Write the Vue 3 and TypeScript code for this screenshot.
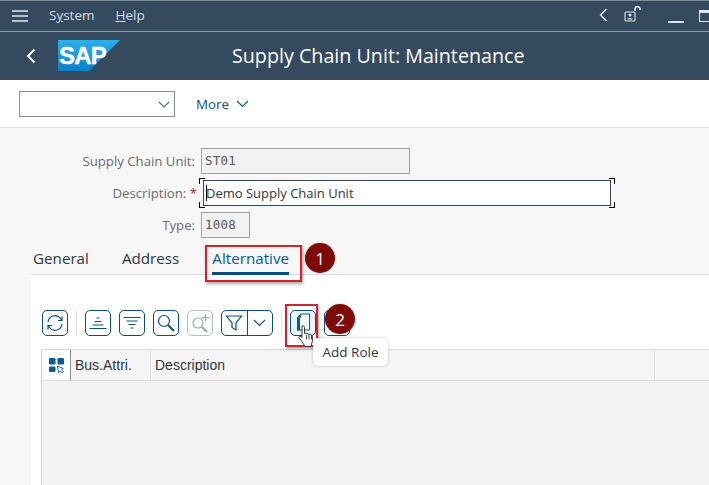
<script setup lang="ts">
const tabs: string[] = ['General', 'Address', 'Alternative']
</script>

<template>
  <div class="page">
    <header class="menubar">
      <svg class="burger" width="16" height="12" viewBox="0 0 16 12"><path d="M0 1h16M0 6h16M0 11h16" stroke="#dfe8f2" stroke-width="1.6" /></svg>
      <span class="menu first">S<u>y</u>stem</span>
      <span class="menu"><u>H</u>elp</span>
      <div class="sys-icons">
        <svg class="sys-back" width="10" height="14" viewBox="0 0 10 14"><path d="M8.500 1 2.500 7l6 6" fill="none" stroke="#e6eef6" stroke-width="1.300" /></svg>
        <svg class="lock" width="17" height="17" viewBox="0 0 17 17"><rect x="1" y="7" width="10" height="9" rx="1" fill="none" stroke="#dbe6f2" stroke-width="1.100" /><circle cx="6" cy="10" r="1.500" fill="#dbe6f2" /><path d="M3.500 14.500c0-2 5-2 5 0z" fill="#dbe6f2" /><path d="M11 6V3.500a2.600 2.600 0 0 1 5 0V5" fill="none" stroke="#dbe6f2" stroke-width="1.600" /></svg>
        <span class="minimize"></span>
        <span class="maximize"></span>
      </div>
    </header>

    <section class="titlebar">
      <svg class="back" width="11" height="16" viewBox="0 0 11 16"><path d="M9.500 1.500 3 8l6.500 6.500" fill="none" stroke="#fff" stroke-width="2" /></svg>
      <svg class="logo" width="62" height="31" viewBox="0 0 62 31">
        <defs><linearGradient id="sapg" x1="0" y1="0" x2="0" y2="1"><stop offset="0" stop-color="#2db0ec" /><stop offset="1" stop-color="#0a80c8" /></linearGradient></defs>
        <polygon points="0,0 62,0 31,31 0,31" fill="url(#sapg)" />
        <text x="1" y="24" class="logo-text">SAP</text>
      </svg>
      <h1 class="title">Supply Chain Unit: Maintenance</h1>
    </section>

    <section class="toolbar">
      <div class="select">
        <svg width="12" height="7" viewBox="0 0 12 7"><path d="m1 1 5 5 5-5" fill="none" stroke="#4d6a85" stroke-width="1.100" /></svg>
      </div>
      <span class="more">More</span>
      <svg width="13" height="8" viewBox="0 0 13 8"><path d="m1 1 5.500 5.500L12 1" fill="none" stroke="#0a5a94" stroke-width="1.200" /></svg>
    </section>

    <main class="content">
      <div class="form">
        <div class="row">
          <label class="label">Supply Chain Unit:</label>
          <div class="field readonly wide mono">ST01</div>
        </div>
        <div class="row">
          <label class="label">Description: <span class="req">*</span></label>
          <div class="focus-wrap">
            <span class="caret"></span>
            <div class="field editing">Demo Supply Chain Unit</div>
            <i class="br tl"></i><i class="br bl"></i><i class="br tr"></i><i class="br brr"></i>
          </div>
        </div>
        <div class="row">
          <label class="label">Type:</label>
          <div class="field readonly narrow mono">1008</div>
        </div>
      </div>

      <nav class="tabs">
        <span v-for="t in tabs" :key="t" class="tab" :class="{ active: t === 'Alternative' }">{{ t }}</span>
        <span class="mark mark-tab"></span>
        <span class="badge badge-1">1</span>
      </nav>

      <div class="panel">
        <div class="buttons">
          <button class="btn">
            <svg width="20" height="20" viewBox="0 0 20 20" fill="none" stroke="#0a4d7e" stroke-width="1.200"><path d="M3 9a7 7 0 0 1 12.500-3.500L17 7.500M17 3.500v4h-4M17 11A7 7 0 0 1 4.500 14.500L3 12.500M3 16.500v-4h4" /></svg>
          </button>
          <span class="sep"></span>
          <button class="btn">
            <svg width="20" height="20" viewBox="0 0 20 20" stroke="#0a4d7e" stroke-width="1.100"><path d="M8.500 5h3M6.500 8.500h7M4.500 12h11M1.500 15.500h17" /></svg>
          </button>
          <button class="btn">
            <svg width="20" height="20" viewBox="0 0 20 20" stroke="#0a4d7e" stroke-width="1.100"><path d="M1.500 4.500h17M4.500 8h11M6.500 11.500h7M8.500 15h3" /></svg>
          </button>
          <button class="btn">
            <svg width="20" height="20" viewBox="0 0 20 20" fill="none" stroke="#0a4d7e" stroke-width="1.200"><circle cx="8" cy="8" r="5.500" /><path d="m12 12 6 6" stroke-width="2" /></svg>
          </button>
          <button class="btn disabled">
            <svg width="22" height="22" viewBox="0 0 22 22" fill="none" stroke="#88a5bd" stroke-width="1.100"><circle cx="9" cy="11" r="5" /><path d="m13 15 5 5" stroke-width="1.800" /><path d="M16.500 2v7M13 5.500h7" /></svg>
          </button>
          <div class="split">
            <span class="part">
              <svg width="18" height="18" viewBox="0 0 18 18" fill="none" stroke="#0a4d7e" stroke-width="1.200"><path d="M1.500 2h15L11 9v7l-4-2.500V9z" /></svg>
            </span>
            <span class="part">
              <svg width="13" height="8" viewBox="0 0 13 8" fill="none" stroke="#0a4d7e" stroke-width="1.100"><path d="m1 1 5.500 5.500L12 1" /></svg>
            </span>
          </div>
          <span class="sep"></span>
          <button class="btn hover">
            <svg width="16" height="20" viewBox="0 0 16 20"><path d="M6 1h8.500v16H2.500V4.500z" fill="#f4f9fd" stroke="#0a5a94" stroke-width="1" /><path d="M6 1v3.500H2.500z" fill="#0a4d7e" /><path d="M2 4.500h3v13H2z" fill="#0a5a94" /></svg>
          </button>
          <button class="btn"></button>
          <span class="mark mark-btn"></span>
          <span class="badge badge-2">2</span>
          <span class="tooltip">Add Role</span>
          <svg class="cursor" width="18" height="25" viewBox="0 0 18 24"><path d="M4 1.500c1.300-.7 2.500 0 2.500 1.500v6l1-.3c.6-.2 1.300.2 1.500.8l.3-.2c.7-.3 1.400 0 1.600.6.700-.3 1.500 0 1.700.7.800-.3 1.700.2 1.800 1.100v4.800l-1.500 5.500H7l-3-5-3-3.500c-.8-1.200.6-2.400 1.800-1.500l1.200 1z" fill="#fff" stroke="#222" stroke-width=".9" /><path d="M8.500 10v5M11 10v5M13.500 11v4" stroke="#222" stroke-width=".8" /></svg>
        </div>

        <div class="table">
          <div class="thead">
            <div class="selector">
              <svg width="17" height="17" viewBox="0 0 17 17"><rect x="1" y="1" width="6.500" height="6.500" rx="1.200" fill="#0a5a94" /><rect x="9.500" y="1" width="6.500" height="6.500" rx="1.200" fill="#0a5a94" /><rect x="1" y="9.500" width="6.500" height="5.500" rx="1.200" fill="#0a5a94" /><path d="m9.500 9 1 6.500 1.500-1.500 2.500 2 1-1-2-2.500 1.800-1z" fill="#fff" stroke="#0a5a94" stroke-width=".9" /></svg>
            </div>
            <div class="th col-bus">Bus.Attri.</div>
            <div class="th col-desc">Description</div>
            <div class="th col-rest"></div>
          </div>
          <div class="tbody"></div>
        </div>
      </div>
    </main>
  </div>
</template>

<style>
html, body { margin: 0; height: 100%; overflow: hidden; }
</style>

<style scoped>
.page {
  width: 709px;
  height: 485px;
  display: flex;
  flex-direction: column;
  overflow: hidden;
  background: #f7f7f7;
  font-family: "Open Sans", "Noto Sans", sans-serif;
}
.menubar {
  box-sizing: border-box;
  border-top: 1px solid #7c8b9b;
  border-bottom: 1px solid #8797a6;
  background: #354a5f;
  flex: none;
  height: 32px;
  display: flex;
  align-items: center;
  padding-left: 12px;
  color: #d5dfe9;
  font-size: 13.500px;
}
.burger { flex: none; }
.menu { margin-left: 21px; padding-bottom: 2px; }
.sys-icons {
  margin-left: auto;
  display: flex;
  align-items: center;
  width: 111px;
  flex: none;
}
.sys-back { flex: none; margin-bottom: 3px; }
.lock { margin-left: 16px; margin-bottom: 5px; flex: none; }
.minimize {
  width: 16px;
  height: 2px;
  background: #dbe6f2;
  margin-left: 27px;
  margin-top: 12px;
  flex: none;
}
.maximize {
  width: 14px;
  height: 12px;
  box-sizing: border-box;
  border: 1px solid #dbe6f2;
  border-top-width: 3px;
  margin-left: 15px;
  flex: none;
}
.titlebar {
  height: 48px;
  flex: none;
  background: #354a5f;
  display: flex;
  align-items: center;
  padding-left: 25px;
}
.back { flex: none; }
.logo { margin-left: 22px; margin-top: -2px; flex: none; }
.logo-text {
  font-family: "Liberation Sans", sans-serif;
  font-size: 24px;
  font-weight: 700;
  fill: #fff;
  letter-spacing: -0.8px;
  stroke: #fff;
  stroke-width: 0.4px;
}
.title {
  margin: 0 0 2px 112px;
  color: #fff;
  font-size: 19.700px;
  font-weight: 400;
  white-space: nowrap;
}
.toolbar {
  height: 48px;
  flex: none;
  box-sizing: border-box;
  background: #fff;
  border-bottom: 1px solid #dcdcdc;
  display: flex;
  align-items: center;
  padding: 1px 0 0 19px;
}
.select {
  width: 156px;
  height: 26px;
  box-sizing: border-box;
  border: 1px solid #8c8c8c;
  background: #fff;
  display: flex;
  align-items: center;
  justify-content: flex-end;
  padding-right: 4px;
}
.more {
  margin-left: 21px;
  margin-right: 7px;
  font-size: 13.300px;
  color: #0a4d7e;
}
.content {
  flex: 1;
  min-height: 0;
  display: flex;
  flex-direction: column;
}
.form {
  padding-top: 20px;
  display: flex;
  flex-direction: column;
  gap: 6px;
  height: 110px;
  box-sizing: border-box;
  flex: none;
}
.row {
  display: flex;
  align-items: center;
  height: 26px;
}
.label {
  width: 195px;
  flex: none;
  text-align: right;
  font-size: 13.200px;
  color: #6a6d70;
  white-space: pre;
}
.req { color: #b3261e; margin-right: -2px; }
.field {
  box-sizing: border-box;
  height: 26px;
  line-height: 24px;
  font-size: 13px;
  color: #32363a;
  padding-left: 3px;
  white-space: nowrap;
}
.readonly {
  margin-left: 6px;
  background: #f2f2f2;
  border: 1px solid #a0a3a5;
}
.mono {
  font-family: "DejaVu Sans Mono", monospace;
  font-size: 12.500px;
  letter-spacing: 0.2px;
  color: #55585b;
}
.wide { width: 209px; }
.narrow { width: 49px; }
.focus-wrap {
  position: relative;
  margin-left: 8px;
  width: 408px;
  height: 26px;
}
.editing {
  width: 100%;
  background: #fff;
  border: 1px solid #354a5f;
  box-shadow: 0 0 0 1px #eef6fc;
  padding-left: 2px;
}
.caret {
  position: absolute;
  left: 3px;
  top: 5px;
  width: 1px;
  height: 16px;
  background: #000;
}
.br {
  position: absolute;
  width: 5px;
  height: 5px;
  border: 0 solid #000;
}
.tl { left: -4px; top: -2px; border-left-width: 1.500px; border-top-width: 1.500px; }
.bl { left: -4px; bottom: -2px; border-left-width: 1.500px; border-bottom-width: 1.500px; }
.tr { right: -4px; top: -2px; border-right-width: 1.500px; border-top-width: 1.500px; }
.brr { right: -4px; bottom: -2px; border-right-width: 1.500px; border-bottom-width: 1.500px; }
.tabs {
  position: relative;
  z-index: 1;
  flex: none;
  height: 37px;
  box-sizing: border-box;
  margin-left: 31px;
  border-bottom: 1px solid #dcdcdc;
  display: flex;
  align-items: flex-start;
  gap: 33px;
  padding-left: 2px;
  font-size: 15.200px;
  color: #32363a;
}
.tab {
  height: 37px;
  line-height: 22px;
  box-sizing: border-box;
  white-space: nowrap;
  padding-top: 9px;
}
.tab.active {
  color: #0a5a94;
  border-bottom: 3px solid #0a4d7e;
}
.mark {
  position: absolute;
  box-sizing: border-box;
  border: 2px solid #d2232a;
  box-shadow: 1px 2px 3px rgba(0, 0, 0, 0.35);
}
.mark-tab {
  left: 174px;
  top: 7px;
  width: 97px;
  height: 37px;
}
.badge {
  position: absolute;
  width: 30px;
  height: 30px;
  border-radius: 50%;
  background: #7e0a0a;
  color: #fff;
  display: flex;
  align-items: center;
  justify-content: center;
  font-size: 17px;
  box-shadow: 0 0 2px rgba(0, 0, 0, 0.3);
}
.badge-1 { left: 274px; top: 5px; }
.panel {
  flex: 1;
  min-height: 0;
  margin-left: 31px;
  background: #fff;
  padding: 35px 0 0 10px;
  position: relative;
}
.buttons {
  display: flex;
  align-items: center;
  height: 26px;
  padding-left: 1px;
  gap: 8px;
}
.btn {
  width: 26px;
  height: 26px;
  box-sizing: border-box;
  border: 1.500px solid #0a4d7e;
  border-radius: 5px;
  background: #fff;
  padding: 0;
  display: flex;
  align-items: center;
  justify-content: center;
  flex: none;
}
.btn.disabled { border-color: #aabfd0; }
.btn.hover { background: #eaf3fa; }
.sep {
  width: 1px;
  height: 26px;
  background: #e2e2e2;
  flex: none;
}
.split {
  width: 52px;
  height: 26px;
  box-sizing: border-box;
  border: 1.500px solid #0a4d7e;
  border-radius: 5px;
  display: flex;
  flex: none;
}
.part {
  flex: 1;
  display: flex;
  align-items: center;
  justify-content: center;
}
.part + .part { border-left: 1px solid #0a4d7e; }
.cursor {
  position: absolute;
  left: 267px;
  top: 49px;
  z-index: 3;
}
.mark-btn {
  left: 254px;
  top: 29px;
  width: 33px;
  height: 43px;
}
.badge-2 { left: 294px; top: 29px; }
.tooltip {
  position: absolute;
  left: 282px;
  top: 63px;
  width: 75px;
  height: 28px;
  box-sizing: border-box;
  background: #fff;
  border-radius: 5px;
  box-shadow: 0 0 3px rgba(0, 0, 0, 0.25);
  font-size: 13.500px;
  color: #32363a;
  text-align: center;
  line-height: 28px;
  z-index: 2;
}
.table {
  margin-top: 13px;
  height: 200px;
  border-left: 1px solid #d0d0d0;
  border-top: 1px solid #dcdcdc;
}
.thead {
  height: 31px;
  box-sizing: border-box;
  background: #f5f5f5;
  border-bottom: 1px solid #dcdcdc;
  display: flex;
  font-family: "Liberation Sans", sans-serif;
  font-size: 14px;
  color: #32363a;
}
.selector {
  width: 28px;
  flex: none;
  background: #fff;
  border-right: 1px solid #8a8a8a;
  display: flex;
  align-items: center;
  justify-content: center;
}
.th {
  line-height: 30px;
  padding-left: 4px;
  box-sizing: border-box;
  border-right: 1px solid #e3e3e3;
  flex: none;
}
.col-bus { width: 80px; }
.col-desc { width: 504px; }
.col-rest { flex: 1; border-right: 0; }
.tbody {
  height: 100%;
  background: #f2f2f2;
}
</style>
